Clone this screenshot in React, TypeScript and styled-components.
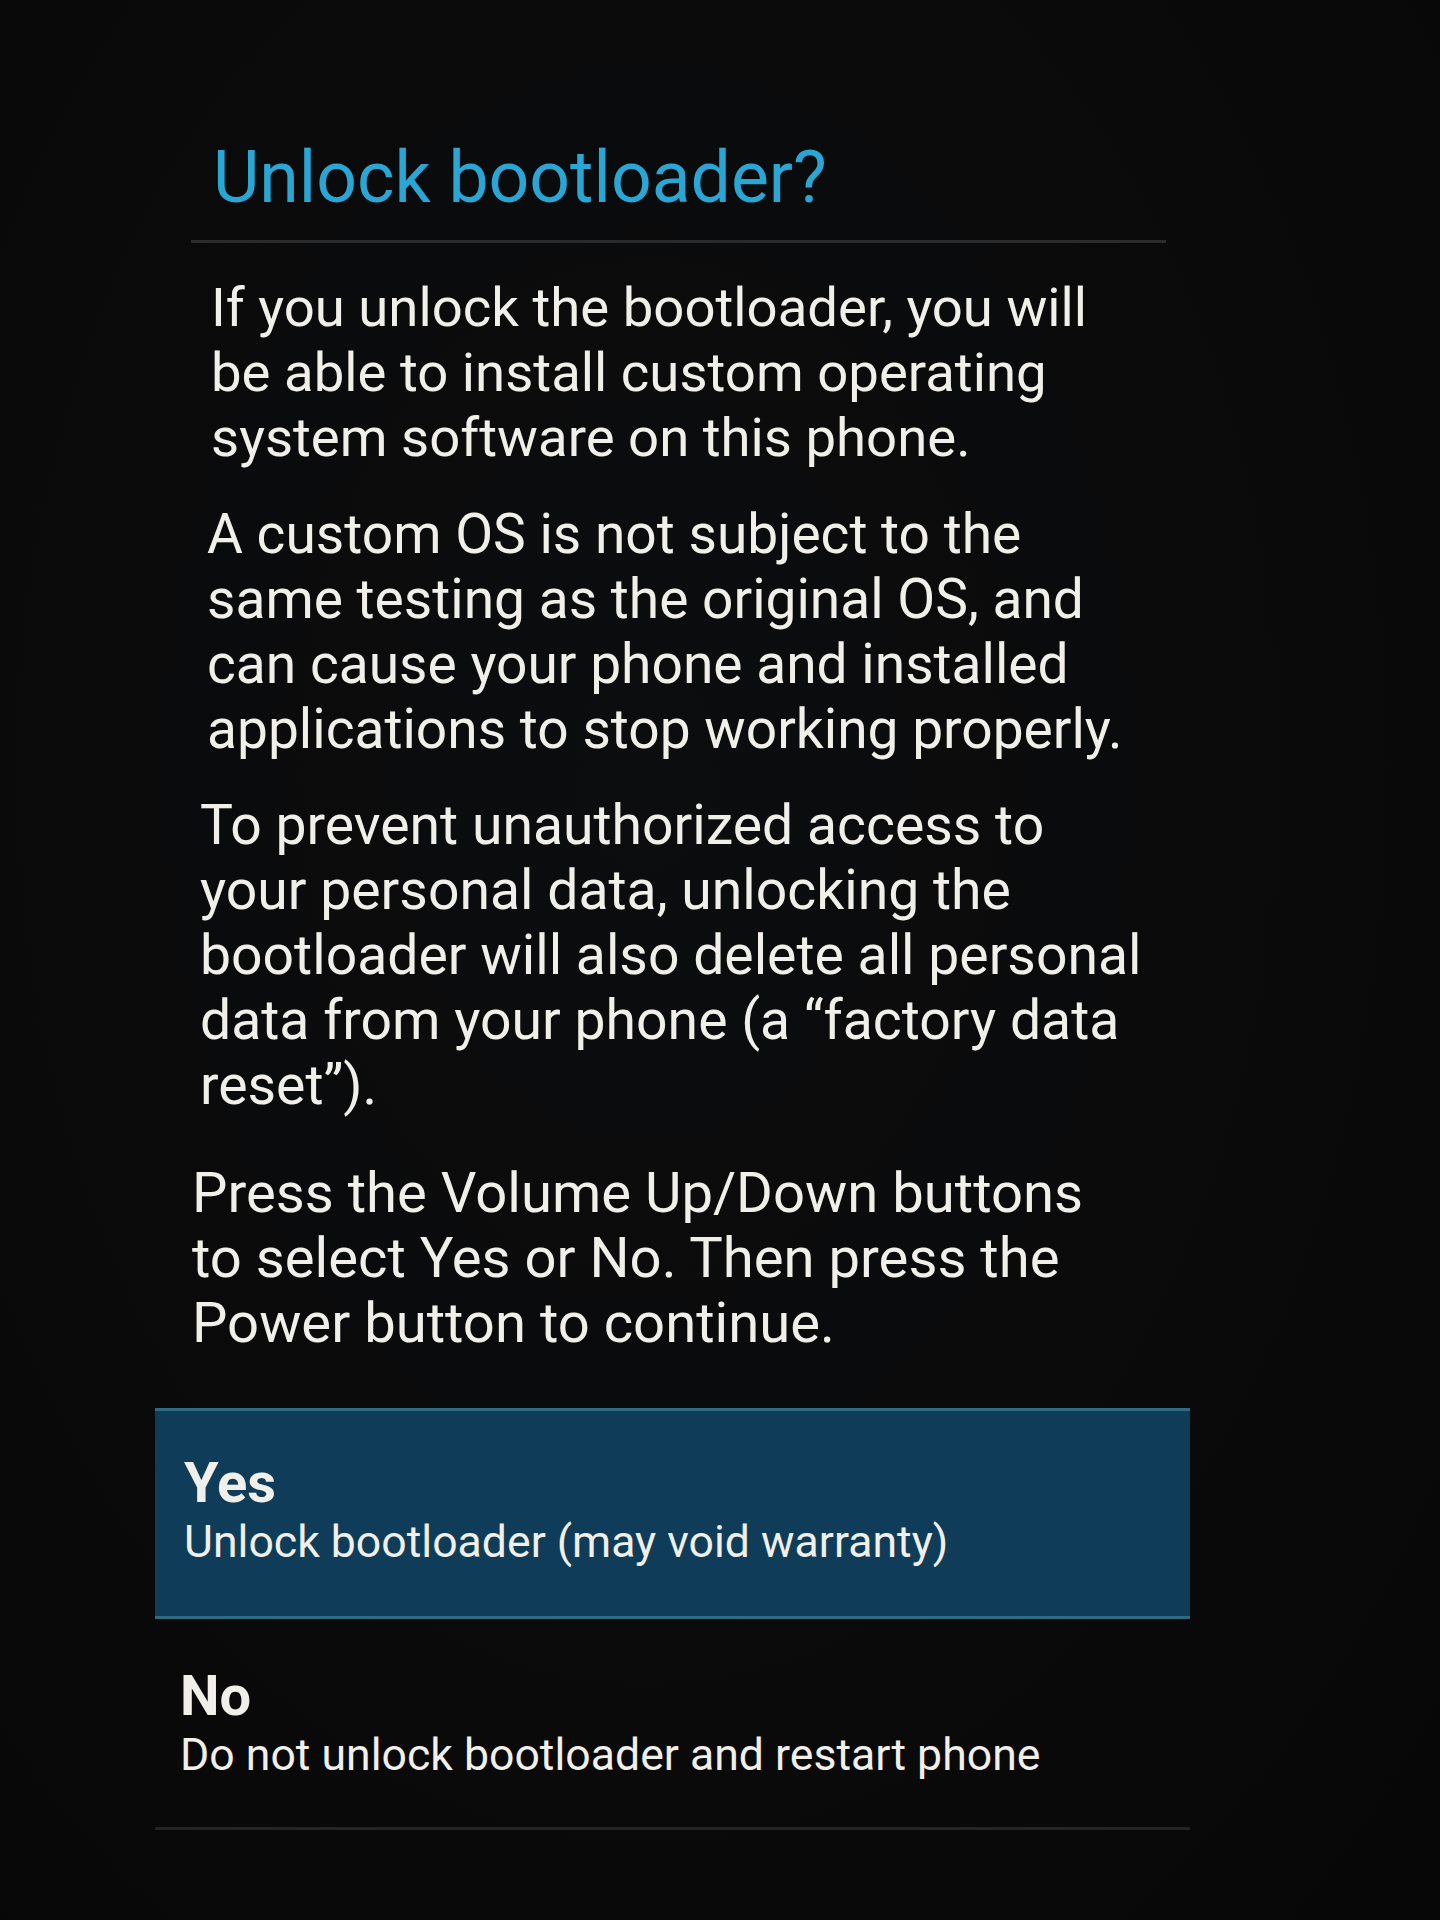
import React from "react";
import styled, { createGlobalStyle } from "styled-components";

const Global = createGlobalStyle`
  html, body {
    margin: 0;
    padding: 0;
    background: #0a0a0c;
  }
  body {
    font-family: Roboto, "Noto Sans", "Liberation Sans", sans-serif;
  }
`;

const Screen = styled.div`
  width: 1440px;
  height: 1920px;
  box-sizing: border-box;
  background: radial-gradient(ellipse at 45% 40%, #0c0d0e 0%, #0a0a0b 60%, #070708 100%);
  display: flex;
  flex-direction: column;
  padding-top: 136px;
  overflow: hidden;
`;

const Header = styled.div`
  display: flex;
  flex-direction: column;
  padding-left: 191px;
  width: 975px;
`;

const Title = styled.h1`
  margin: 0 0 0 22px;
  font-family: Roboto, "Noto Sans", sans-serif;
  font-weight: 400;
  font-size: 71.5px;
  line-height: 84px;
  color: #2aa6d5;
`;

const Rule = styled.div`
  margin-top: 20px;
  height: 3px;
  background: #2a2b2d;
`;

const Body = styled.div`
  display: flex;
  flex-direction: column;
  margin-top: 32px;
`;

const Para = styled.p<{ $indent: number; $space: number; $size: number }>`
  margin: ${(p) => p.$space}px 0 0 ${(p) => p.$indent}px;
  font-family: Roboto, "Noto Sans", sans-serif;
  font-size: ${(p) => p.$size}px;
  line-height: 65px;
  color: #f1efe9;
  white-space: pre-line;
`;

const Options = styled.div`
  display: flex;
  flex-direction: column;
  margin-top: 52px;
  margin-left: 155px;
  width: 1035px;
`;

const Option = styled.div<{ $selected?: boolean; $padLeft: number; $padTop: number; $padBottom: number }>`
  display: flex;
  flex-direction: column;
  padding: ${(p) => p.$padTop}px 0 ${(p) => p.$padBottom}px ${(p) => p.$padLeft}px;
  background: ${(p) => (p.$selected ? "#0f3d59" : "transparent")};
  border-top: 3px solid ${(p) => (p.$selected ? "#2e6a80" : "transparent")};
  border-bottom: 3px solid ${(p) => (p.$selected ? "#2e6a80" : "#232427")};
`;

const OptionTitle = styled.div`
  font-family: Roboto, "Noto Sans", sans-serif;
  font-weight: 700;
  font-size: 56px;
  line-height: 60px;
  color: #f1efe9;
`;

const OptionSub = styled.div`
  font-family: Roboto, "Noto Sans", sans-serif;
  font-weight: 400;
  font-size: 44.6px;
  line-height: 58px;
  color: #f1efe9;
`;

export default function App() {
  return (
    <>
      <Global />
      <Screen>
        <Header>
          <Title>Unlock bootloader?</Title>
          <Rule />
        </Header>
        <Body>
          <Para $indent={211} $space={0} $size={54.5}>
            {"If you unlock the bootloader, you will\nbe able to install custom operating\nsystem software on this phone."}
          </Para>
          <Para $indent={207} $space={32} $size={55.1}>
            {"A custom OS is not subject to the\nsame testing as the original OS, and\ncan cause your phone and installed\napplications to stop working properly."}
          </Para>
          <Para $indent={200} $space={31} $size={55.3}>
            {"To prevent unauthorized access to\nyour personal data, unlocking the\nbootloader will also delete all personal\ndata from your phone (a \u201cfactory data\nreset\u201d)."}
          </Para>
          <Para $indent={192} $space={43} $size={56.2}>
            {"Press the Volume Up/Down buttons\nto select Yes or No. Then press the\nPower button to continue."}
          </Para>
        </Body>
        <Options>
          <Option $selected $padLeft={29} $padTop={42} $padBottom={45}>
            <OptionTitle>Yes</OptionTitle>
            <OptionSub>Unlock bootloader (may void warranty)</OptionSub>
          </Option>
          <Option $padLeft={25} $padTop={44} $padBottom={43}>
            <OptionTitle>No</OptionTitle>
            <OptionSub>Do not unlock bootloader and restart phone</OptionSub>
          </Option>
        </Options>
      </Screen>
    </>
  );
}
